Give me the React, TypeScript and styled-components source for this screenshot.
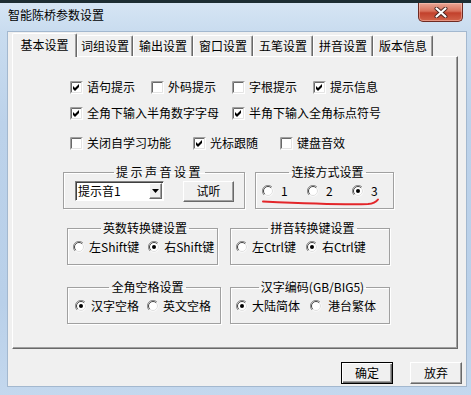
import React from "react";
import styled, { createGlobalStyle } from "styled-components";

const GlobalStyle = createGlobalStyle`
  html, body { margin: 0; padding: 0; background: #1b2a31; }
  body {
    width: 471px; height: 395px; overflow: hidden;
    font-family: "Noto Sans CJK SC", "Liberation Sans", sans-serif;
    font-size: 12px; color: #000;
  }
  * { box-sizing: border-box; }
`;

const Window = styled.div`
  width: 471px;
  height: 395px;
  display: flex;
  flex-direction: column;
  border-top: 3px solid #1d2d33;
  background: linear-gradient(180deg, #d6e5f4 0px, #c9dcef 28px, #bcd2ea 120px, #b9d0e9 300px, #c4d8ee 395px);
  padding: 0 4px 8px 7px;
`;

const TitleBar = styled.div`
  height: 28px;
  display: flex;
  justify-content: space-between;
  align-items: flex-start;
  margin-right: 4px;
`;

const Title = styled.div`
  margin: 4px 0 0 1px;
  line-height: 16px;
  font-size: 12px;
  color: #000;
`;

const CloseButton = styled.div`
  width: 45px;
  height: 19px;
  display: flex;
  align-items: center;
  justify-content: center;
  border: 1px solid #6e2a22;
  border-top: none;
  border-radius: 0 0 5px 5px;
  background: linear-gradient(180deg, #e9a696 0%, #d8705a 45%, #c2412c 55%, #d2634a 100%);
  box-shadow: inset 0 0 0 1px rgba(255, 210, 200, 0.45);
`;

const Client = styled.div`
  flex: 1;
  display: flex;
  flex-direction: column;
  background: #f0f0f0;
  border: 1px solid #a3b8cf;
`;

const TabBar = styled.div`
  height: 24px;
  display: flex;
  align-items: flex-end;
  padding-left: 4px;
`;

const Tab = styled.div<{ $active?: boolean; $w: number }>`
  width: ${(p) => p.$w}px;
  height: ${(p) => (p.$active ? 24 : 21)}px;
  margin-bottom: ${(p) => (p.$active ? -1 : 0)}px;
  position: relative;
  z-index: ${(p) => (p.$active ? 1 : 0)};
  display: flex;
  align-items: center;
  justify-content: center;
  padding-bottom: ${(p) => (p.$active ? 2 : 0)}px;
  background: #f0f0f0;
  border-top: 1px solid #fff;
  border-left: 1px solid #fff;
  border-right: 1px solid #696969;
  box-shadow: inset -1px 0 0 #a0a0a0;
  border-radius: 2px 2px 0 0;
  font-size: 12px;
  line-height: 16px;
`;

const Panel = styled.div`
  height: 293px;
  margin: 0 8px 0 4px;
  display: flex;
  flex-direction: column;
  padding-top: 20px;
  border: 1px solid;
  border-color: #fff #696969 #696969 #fff;
  box-shadow: inset -1px -1px 0 #a0a0a0;
`;

const CheckRow = styled.div<{ $gap: number; $mt: number }>`
  height: 20px;
  display: flex;
  align-items: center;
  padding-left: 57px;
  gap: ${(p) => p.$gap}px;
  margin-top: ${(p) => p.$mt}px;
`;

const OptionLabel = styled.label<{ $w?: number; $gap?: number }>`
  display: flex;
  align-items: center;
  gap: ${(p) => p.$gap ?? 4}px;
  ${(p) => (p.$w ? `width: ${p.$w}px; flex: none;` : "")}
  line-height: 16px;
  white-space: nowrap;
`;

const GroupRow = styled.div<{ $pl: number; $gap: number; $mt: number }>`
  display: flex;
  padding-left: ${(p) => p.$pl}px;
  gap: ${(p) => p.$gap}px;
  margin-top: ${(p) => p.$mt}px;
`;

const Group = styled.fieldset<{ $w: number; $pl: number }>`
  position: relative;
  width: ${(p) => p.$w}px;
  min-width: 0;
  margin: 0;
  padding: 0 0 6px ${(p) => p.$pl}px;
  border: 1px solid #a0a0a0;
  box-shadow: inset 1px 1px 0 #fff, 1px 1px 0 #fff;
`;

const Legend = styled.legend<{ $ls?: number }>`
  margin: 0 auto;
  padding: 0 2px;
  line-height: 16px;
  font-size: 12px;
  letter-spacing: ${(p) => p.$ls ?? 0}px;
`;

const GroupBody = styled.div<{ $gap?: number }>`
  height: 22px;
  display: flex;
  align-items: center;
  gap: ${(p) => p.$gap ?? 0}px;
`;

const SelectBox = styled.div`
  width: 89px;
  height: 20px;
  display: flex;
  align-items: center;
  justify-content: space-between;
  background: #fff;
  border: 1px solid;
  border-color: #808080 #fff #fff #808080;
  box-shadow: inset 1px 1px 0 #404040;
  padding: 1px 1px 1px 2px;
`;

const SelectText = styled.span`
  line-height: 16px;
`;

const DropButton = styled.div`
  width: 13px;
  height: 16px;
  display: flex;
  align-items: center;
  justify-content: center;
  background: #f0f0f0;
  border: 1px solid;
  border-color: #fff #696969 #696969 #fff;
  box-shadow: inset -1px -1px 0 #a0a0a0;
`;

const Button = styled.div<{ $w: number; $h: number; $default?: boolean }>`
  width: ${(p) => p.$w}px;
  height: ${(p) => p.$h}px;
  display: flex;
  align-items: center;
  justify-content: center;
  background: #f0f0f0;
  line-height: 16px;
  border: 1px solid;
  border-color: ${(p) => (p.$default ? "#000 #000 #000 #000" : "#fff #696969 #696969 #fff")};
  box-shadow: ${(p) =>
    p.$default
      ? "inset 1px 1px 0 #fff, inset -1px -1px 0 #696969, inset -2px -2px 0 #a0a0a0"
      : "inset -1px -1px 0 #a0a0a0"};
`;

const ButtonRow = styled.div`
  display: flex;
  justify-content: flex-end;
  gap: 17px;
  margin-top: 13px;
  padding-right: 4px;
`;

const Annotation = styled.svg`
  position: absolute;
  left: 0;
  top: 0;
  pointer-events: none;
  overflow: visible;
`;

const Check = ({ on }: { on?: boolean }) => (
  <svg width="13" height="13" viewBox="0 0 13 13">
    <rect x="0" y="0" width="13" height="13" fill="#fff" />
    <path d="M0.5 12.5 V0.5 H12.5" stroke="#a0a0a0" fill="none" />
    <path d="M1.5 11.5 V1.5 H11.5" stroke="#696969" fill="none" />
    <path d="M1.5 11.5 H11.5 V1.5" stroke="#e3e3e3" fill="none" />
    {on && <polygon points="3,5 5,7 9,3 9,6 5,10 3,8" fill="#000" />}
  </svg>
);

const Radio = ({ on }: { on?: boolean }) => (
  <svg width="12" height="12" viewBox="0 0 12 12">
    <circle cx="6" cy="6" r="5.5" fill="#fff" />
    <path d="M10 2 A5.6 5.6 0 0 0 2 10" stroke="#8c8c8c" strokeWidth="1" fill="none" />
    <path d="M9.2 2.8 A4.5 4.5 0 0 0 2.8 9.2" stroke="#444" strokeWidth="1" fill="none" />
    <path d="M2.8 9.2 A4.5 4.5 0 0 0 9.2 2.8" stroke="#e0e0e0" strokeWidth="1" fill="none" />
    {on && <circle cx="6" cy="6" r="2" fill="#000" />}
  </svg>
);

const CheckItem = ({ on, text }: { on?: boolean; text: string }) => (
  <OptionLabel>
    <Check on={on} />
    <span>{text}</span>
  </OptionLabel>
);

const RadioItem = ({ on, text, w, gap }: { on?: boolean; text: string; w?: number; gap?: number }) => (
  <OptionLabel $w={w} $gap={gap}>
    <Radio on={on} />
    <span>{text}</span>
  </OptionLabel>
);

const tabs = [
  { t: "基本设置", w: 65 },
  { t: "词组设置", w: 56 },
  { t: "输出设置", w: 60 },
  { t: "窗口设置", w: 60 },
  { t: "五笔设置", w: 60 },
  { t: "拼音设置", w: 60 },
  { t: "版本信息", w: 60 },
];

export default function App() {
  return (
    <>
      <GlobalStyle />
      <Window>
        <TitleBar>
          <Title>智能陈桥参数设置</Title>
          <CloseButton>
            <svg width="14" height="11" viewBox="0 0 14 11">
              <path d="M2.5 1.5 L11.5 9.5 M11.5 1.5 L2.5 9.5" stroke="#4a2420" strokeWidth="4" strokeLinecap="round" />
              <path d="M2.5 1.5 L11.5 9.5 M11.5 1.5 L2.5 9.5" stroke="#fff" strokeWidth="2.2" strokeLinecap="round" />
            </svg>
          </CloseButton>
        </TitleBar>
        <Client>
          <TabBar>
            {tabs.map((tb, i) => (
              <Tab key={tb.t} $w={tb.w} $active={i === 0}>
                {tb.t}
              </Tab>
            ))}
          </TabBar>
          <Panel>
            <CheckRow $gap={16} $mt={0}>
              <CheckItem on text="语句提示" />
              <CheckItem text="外码提示" />
              <CheckItem text="字根提示" />
              <CheckItem on text="提示信息" />
            </CheckRow>
            <CheckRow $gap={13} $mt={6}>
              <CheckItem on text="全角下输入半角数字字母" />
              <CheckItem on text="半角下输入全角标点符号" />
            </CheckRow>
            <CheckRow $gap={22} $mt={10}>
              <CheckItem text="关闭自学习功能" />
              <CheckItem on text="光标跟随" />
              <CheckItem text="键盘音效" />
            </CheckRow>

            <GroupRow $pl={50} $gap={10} $mt={11}>
              <Group $w={182} $pl={11}>
                <Legend $ls={2.5}>提示声音设置</Legend>
                <GroupBody $gap={19}>
                  <SelectBox>
                    <SelectText>提示音1</SelectText>
                    <DropButton>
                      <svg width="7" height="4" viewBox="0 0 7 4">
                        <polygon points="0,0 7,0 3.5,4" fill="#000" />
                      </svg>
                    </DropButton>
                  </SelectBox>
                  <Button $w={51} $h={21}>试听</Button>
                </GroupBody>
              </Group>
              <Group $w={139} $pl={6}>
                <Legend>连接方式设置</Legend>
                <GroupBody>
                  <RadioItem text="1" w={45} gap={7} />
                  <RadioItem text="2" w={45} gap={7} />
                  <RadioItem on text="3" w={45} gap={7} />
                </GroupBody>
                <Annotation width="139" height="30">
                  <path
                    d="M7 21.5 C 40 23, 90 25, 112 24 Q 119 23.5 122 19.5"
                    stroke="#e3262a"
                    strokeWidth="2"
                    fill="none"
                    strokeLinecap="round"
                  />
                </Annotation>
              </Group>
            </GroupRow>

            <GroupRow $pl={54} $gap={12} $mt={11}>
              <Group $w={151} $pl={5}>
                <Legend>英数转换键设置</Legend>
                <GroupBody $gap={9}>
                  <RadioItem text="左Shift键" />
                  <RadioItem on text="右Shift键" />
                </GroupBody>
              </Group>
              <Group $w={160} $pl={5}>
                <Legend>拼音转换键设置</Legend>
                <GroupBody $gap={10}>
                  <RadioItem text="左Ctrl键" />
                  <RadioItem on text="右Ctrl键" />
                </GroupBody>
              </Group>
            </GroupRow>

            <GroupRow $pl={54} $gap={9} $mt={14}>
              <Group $w={154} $pl={7}>
                <Legend>全角空格设置</Legend>
                <GroupBody $gap={8}>
                  <RadioItem on text="汉字空格" />
                  <RadioItem text="英文空格" />
                </GroupBody>
              </Group>
              <Group $w={160} $pl={5}>
                <Legend>汉字编码(GB/BIG5)</Legend>
                <GroupBody $gap={10}>
                  <RadioItem on text="大陆简体" />
                  <RadioItem text="港台繁体" gap={6} />
                </GroupBody>
              </Group>
            </GroupRow>
          </Panel>
          <ButtonRow>
            <Button $w={52} $h={22} $default>确定</Button>
            <Button $w={52} $h={22}>放弃</Button>
          </ButtonRow>
        </Client>
      </Window>
    </>
  );
}
